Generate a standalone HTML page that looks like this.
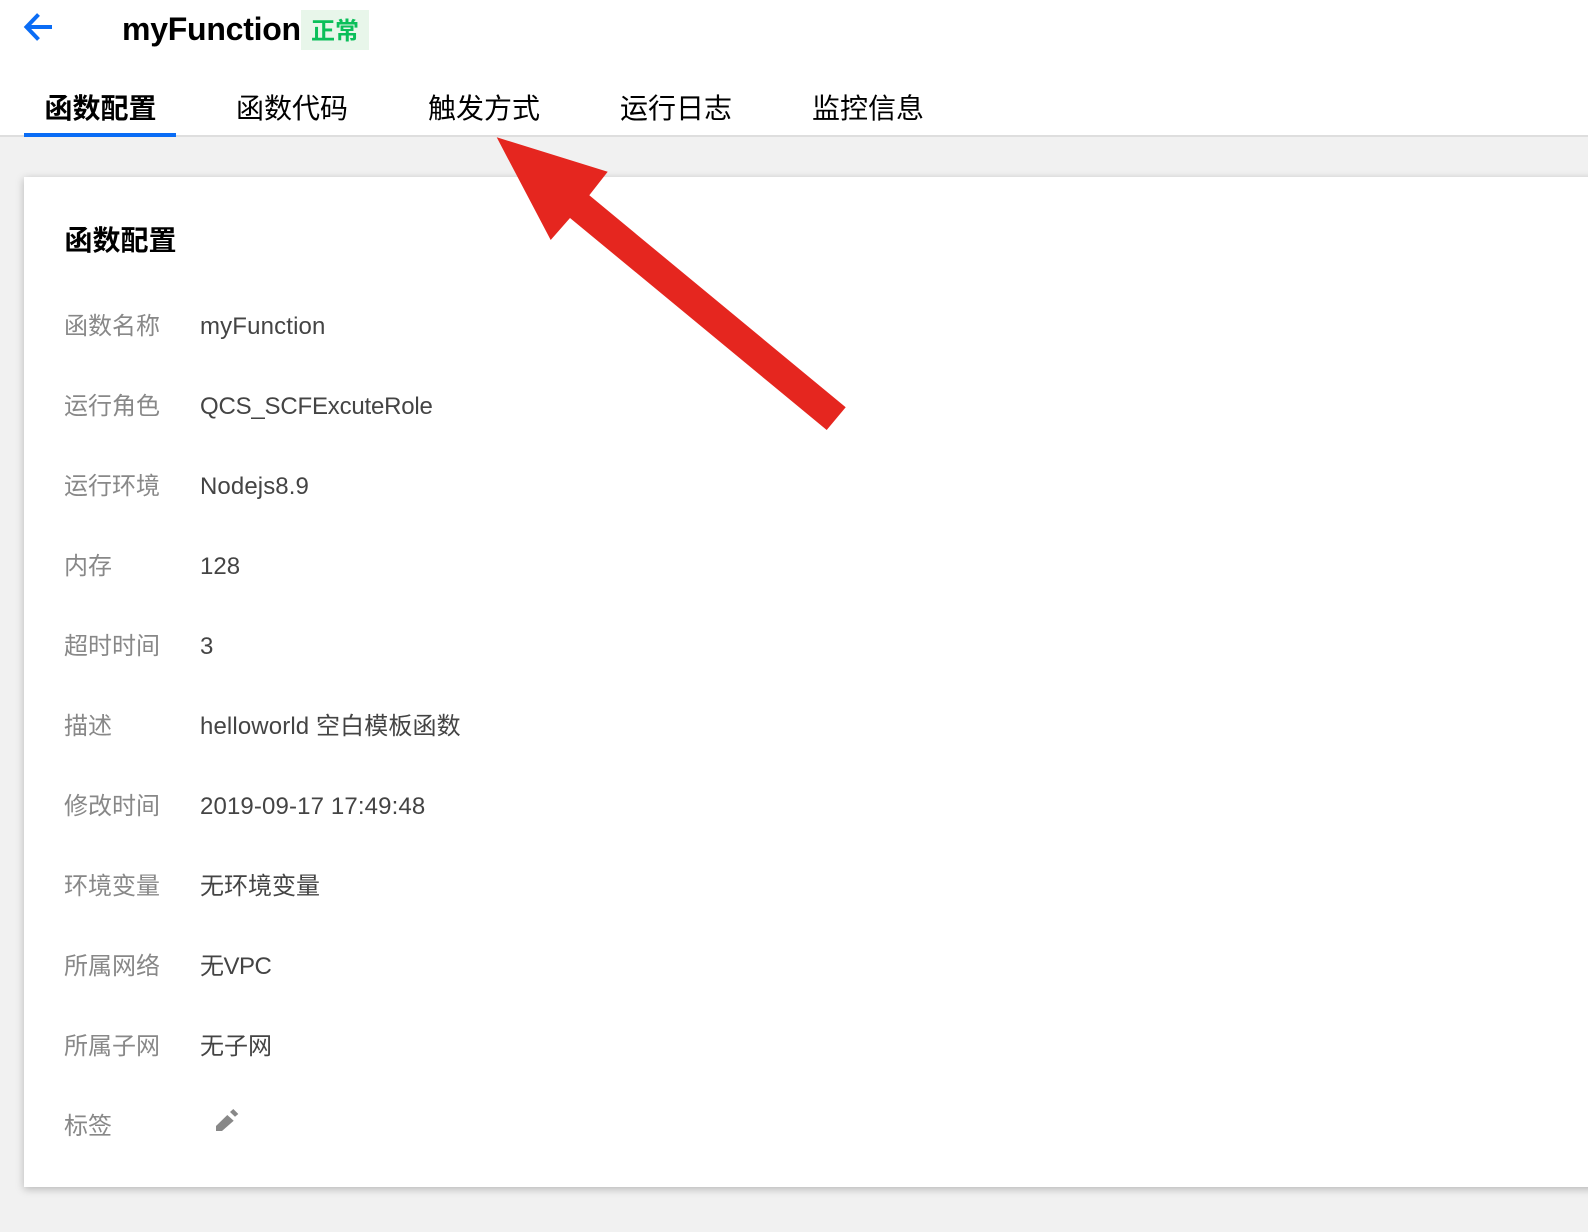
<!DOCTYPE html>
<html lang="zh">
<head>
<meta charset="utf-8">
<title>myFunction</title>
<style>
html,body{margin:0;padding:0}
body{width:1588px;height:1232px;background:#f1f1f1;position:relative;overflow:hidden;font-family:"Liberation Sans","Noto Sans CJK SC",sans-serif}
.t{position:absolute;white-space:nowrap;line-height:40px;height:40px}
.hdr{position:absolute;left:0;top:0;width:1588px;height:135px;background:#fff;border-bottom:2px solid #dedede}
.tab{font-size:28px;color:#000;top:89px}
.l{font-size:24px;color:#888;left:64px}
.v{font-size:24px;color:#444;left:200px}
.card{position:absolute;left:24px;top:177px;width:1600px;height:1010px;background:#fff;box-shadow:0 2px 8px rgba(0,0,0,.25)}
</style>
</head>
<body>
<div class="hdr"></div>
<svg style="position:absolute;left:0;top:0" width="80" height="60" viewBox="0 0 80 60"><path d="M52 27H28M38.5 14.5L26.5 27L38.5 39.5" fill="none" stroke="#0a6cf5" stroke-width="4"/></svg>
<div class="t" style="left:122px;top:9px;font-size:32px;font-weight:bold;color:#000;letter-spacing:-.25px">myFunction</div>
<div style="position:absolute;left:301px;top:10px;width:68px;height:40px;background:#e8f6ea"></div>
<div class="t" style="left:311px;top:12px;font-size:24px;font-weight:bold;color:#0bbf5a">正常</div>
<div class="t tab" style="left:44.5px;font-weight:bold">函数配置</div>
<div class="t tab" style="left:236px">函数代码</div>
<div class="t tab" style="left:428px">触发方式</div>
<div class="t tab" style="left:620px">运行日志</div>
<div class="t tab" style="left:812px">监控信息</div>
<div style="position:absolute;left:24px;top:133px;width:152px;height:4px;background:#0a6cf5"></div>
<div class="card"></div>
<div class="t" style="left:64.5px;top:221px;font-size:28px;font-weight:bold;color:#000">函数配置</div>
<div class="t l" style="top:307px">函数名称</div><div class="t v" style="top:307px;letter-spacing:.15px">myFunction</div>
<div class="t l" style="top:387px">运行角色</div><div class="t v" style="top:387px;letter-spacing:-.2px">QCS_SCFExcuteRole</div>
<div class="t l" style="top:467px">运行环境</div><div class="t v" style="top:467px;letter-spacing:.1px">Nodejs8.9</div>
<div class="t l" style="top:547px">内存</div><div class="t v" style="top:547px">128</div>
<div class="t l" style="top:627px">超时时间</div><div class="t v" style="top:627px">3</div>
<div class="t l" style="top:707px">描述</div><div class="t v" style="top:707px;letter-spacing:.12px">helloworld 空白模板函数</div>
<div class="t l" style="top:787px">修改时间</div><div class="t v" style="top:787px;letter-spacing:.13px">2019-09-17 17:49:48</div>
<div class="t l" style="top:867px">环境变量</div><div class="t v" style="top:867px">无环境变量</div>
<div class="t l" style="top:947px">所属网络</div><div class="t v" style="top:947px;letter-spacing:-.5px">无VPC</div>
<div class="t l" style="top:1027px">所属子网</div><div class="t v" style="top:1027px">无子网</div>
<div class="t l" style="top:1107px">标签</div>
<svg style="position:absolute;left:200px;top:1100px" width="60" height="60" viewBox="0 0 60 60"><path d="M16 26L27.3 15L33.7 20.7L22 31H16ZM30 12L33.3 9L38.3 14L35 16.7Z" fill="#888"/></svg>
<svg style="position:absolute;left:0;top:0" width="1588" height="1232" viewBox="0 0 1588 1232"><polygon points="496.7,137.3 607.7,171.7 589.3,195.3 845.7,407.3 826.7,430 570,218 550.7,240" fill="#e5261f"/></svg>
</body>
</html>
